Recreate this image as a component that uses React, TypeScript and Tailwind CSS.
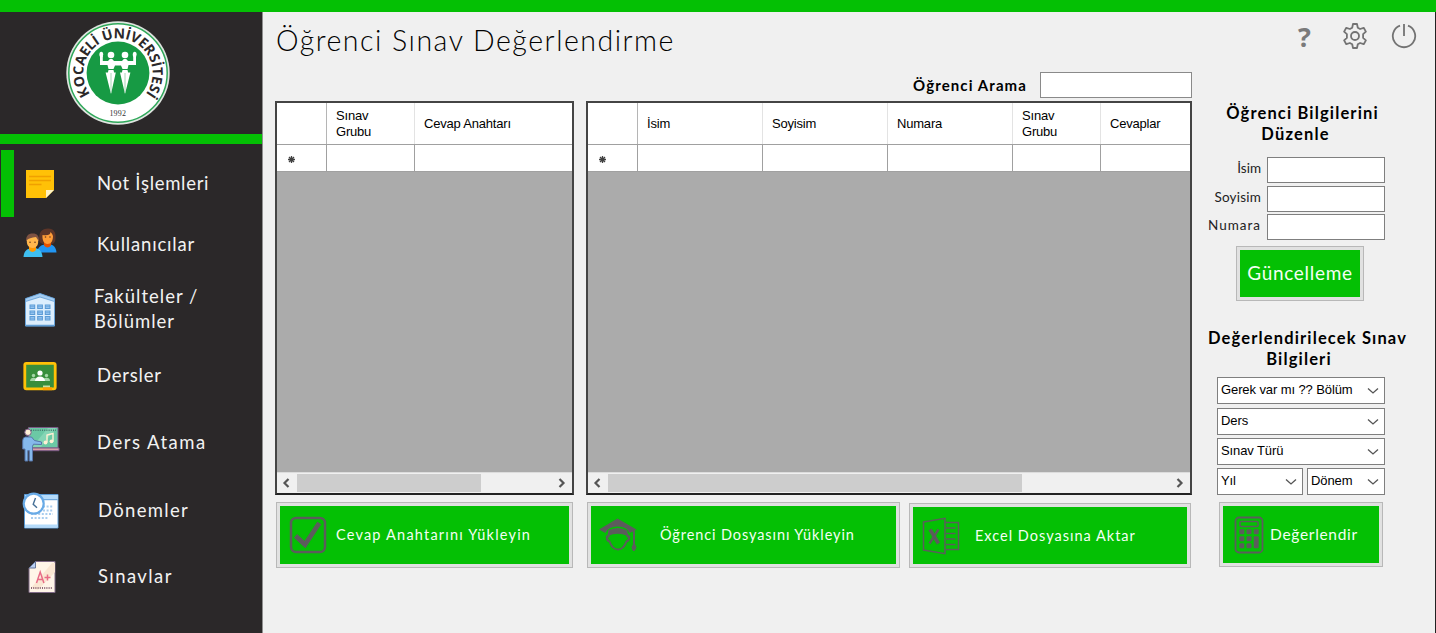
import type { ReactNode } from "react";

function Logo() {
  return (
    <svg width="104" height="104" viewBox="-52 -52 104 104">
      <defs>
        <path id="ring" d="M-26.500 22.500A34.700 34.700 0 1 1 26.500 22.500" />
      </defs>
      <circle r="51.700" fill="#dfe5e0" />
      <circle r="49.200" fill="#fff" stroke="#2fa85a" strokeWidth="1.500" />
      <circle r="31.400" fill="#179a44" />
      <text className="font-['Open_Sans',sans-serif] text-[14px] font-bold" fill="#2b2829" textAnchor="middle">
        <textPath href="#ring" startOffset="50%" textLength="153" lengthAdjust="spacing">KOCAELİ ÜNİVERSİTESİ</textPath>
      </text>
      <g fill="#fff">
        <circle cx="-7" cy="-18" r="3.300" />
        <circle cx="7" cy="-18" r="3.300" />
        <path d="M-18-17h2.800v5h5.200l1.800-2h2.400l1.800 2h8l1.800-2h2.400l1.800 2h5.200v-5H18v9H10.500L9.500-4h-5L3-7.500h-6L-4.500-4h-5l-1-4H-18z" />
        <path d="M-9.500-3h5l.6 2.500h1.700L-7 21-12.400-.500h2.300zM4.500-3h5l.6 2.500h2.300L7 21 2-.500h1.900z" />
        <ellipse cx="-16.700" cy="-18.500" rx="1.900" ry="2.800" />
        <ellipse cx="16.700" cy="-18.500" rx="1.900" ry="2.800" />
      </g>
      <path d="M-7 0v20M7 0v20" stroke="#8fcba4" strokeWidth=".8" />
      <text x="-8.600" y="43" textLength="16.500" className="font-['Liberation_Serif',serif] text-[8px]" fill="#333">1992</text>
    </svg>
  );
}

const NoteIcon = () => (
  <svg width="36" height="36" viewBox="0 0 36 36">
    <path d="M4 4h28v20l-8 8H4z" fill="#ffc107" />
    <path d="M24 32v-8h8z" fill="#fff3c4" />
    <path d="M7 10.500h22M7 14.500h22M7 18.500h12.500" stroke="#f0a000" strokeWidth="1.500" />
  </svg>
);

const UsersIcon = () => (
  <svg width="36" height="36" viewBox="0 0 36 36">
    <path d="M17.500 16C16 6 20 2.500 26 2.500s8 4 7.500 9.500c0 4-2 6-4 6h-9z" fill="#5d3528" />
    <path d="M15 26.500c1-6 4-7.500 9-8.500h3c5 1 7 3.500 7.500 8.500z" fill="#2196f3" />
    <path d="M22 15.500h7v4q-3.500 4-7 0z" fill="#e65100" />
    <path d="M20.500 9q8 1 8-3 2 2 2.500 4c0 5-2 8-5.500 8s-5.500-4-5-9z" fill="#ff9d38" />
    <circle cx="23.500" cy="11" r=".8" fill="#6d3b20" />
    <circle cx="28" cy="11" r=".8" fill="#6d3b20" />
    <path d="M1.500 31c.5-6 3-8 8-9h4c4 1 6.500 3 7 9z" fill="#3fbff0" />
    <path d="M7 20h7v4q-3.500 4-7 0z" fill="#ff9800" />
    <path d="M4 15c0-5 2-7.500 6.700-7.500S17 10 17 15z" fill="#7d5242" />
    <path d="M5 14q2-2 9-3l2 3c1 5-2 8-5.400 8S4 19 5 14z" fill="#ffb74d" />
    <circle cx="8" cy="16.300" r=".8" fill="#6d3b20" />
    <circle cx="13" cy="16.300" r=".8" fill="#6d3b20" />
  </svg>
);

const BuildingIcon = () => (
  <svg width="36" height="36" viewBox="0 0 36 36">
    <path d="M3.500 7L18 1.800 32.500 7v27h-29z" fill="#dceefd" stroke="#6aa3d8" />
    <path d="M3.500 6.500L18 1.500l14.500 5v3L18 5 3.500 9.500z" fill="#a5cdf2" stroke="#5f9cd4" strokeWidth=".8" />
    <path d="M3.500 33.500h29" stroke="#5f9cd4" strokeWidth="1.500" />
    {[13, 19, 24.5].map((y) =>
      [8, 15.7, 23.3].map((x) => (
        <g key={`${x}-${y}`}>
          <rect x={x} y={y} width="4.700" height="3.500" fill="#9ccaf4" stroke="#5b9bd5" />
          <path d={`M${x} ${y + 1.7}h4.700`} stroke="#5b9bd5" strokeWidth=".7" />
        </g>
      )),
    )}
  </svg>
);

const ClassIcon = () => (
  <svg width="36" height="36" viewBox="0 0 36 36">
    <rect x="2.800" y="5.300" width="30.400" height="25.500" rx="1.500" fill="#388e3c" stroke="#ffc107" strokeWidth="2.800" />
    <g fill="#a5d6a7">
      <circle cx="11.500" cy="17.500" r="1.700" />
      <circle cx="24.500" cy="17.500" r="1.700" />
      <path d="M8 23q.5-3.200 3.500-3.200t4 3.200zM20.500 23q.5-3.200 4-3.200t3.500 3.200z" />
    </g>
    <g fill="#fff">
      <circle cx="18" cy="15" r="2.600" />
      <path d="M13 23q.5-4.500 5-4.500t5 4.500z" />
    </g>
    <path d="M21 27.500h7v2h-7z" fill="#c5e1a5" />
    <path d="M21 29.300h9v2.900h-9z" fill="#ffa000" />
  </svg>
);

const TeacherIcon = () => (
  <svg width="40" height="40" viewBox="0 0 40 40">
    <path d="M8.500 3.500h29.500V24H8.500z" fill="#6bc9a5" stroke="#7b5a86" />
    <path d="M12 23L28 4h8L21 23z" fill="#84d5b5" />
    <path d="M11 6.200h25" stroke="#46786f" strokeWidth="1.400" strokeDasharray="1 1.200" />
    <path d="M8 24h31v2.700H8z" fill="#d9a0a8" stroke="#7b5a86" />
    <path d="M27 18.500v-7.500l6-1.500v8" fill="none" stroke="#fff0d4" strokeWidth="1.400" />
    <circle cx="25.500" cy="18.500" r="1.900" fill="#fff0d4" />
    <circle cx="31.500" cy="17.300" r="1.900" fill="#fff0d4" />
    <circle cx="8" cy="8.300" r="3.200" fill="#fff0d4" stroke="#7b5a86" />
    <path d="M5.500 13h6l3 3.500 7 1.500v2.500l-8-.3-1 2V37H9.300V26.500H7.800V37H5V25H2.700V16.500Q3 13 5.500 13z" fill="#85b9ec" stroke="#5775a8" />
  </svg>
);

const CalendarIcon = () => (
  <svg width="38" height="38" viewBox="0 0 38 38">
    <path d="M2.500 2.500h33.500V36H2.500z" fill="#fff" stroke="#5b9bd5" />
    <path d="M3 3h32.500v4.500H3zM3 32.500h32.500v3H3z" fill="#b4dbfb" />
    <path d="M3 7.700h32.500" stroke="#5b9bd5" />
    <path d="M21 14.500h10M21 18.500h10M9 22h22M9 26h18" stroke="#a9cdee" strokeWidth="2" strokeDasharray="2 1.600" />
    <circle cx="11.700" cy="11.700" r="10" fill="#fff" stroke="#68aae6" strokeWidth="2.200" />
    <path d="M13.500 6L11.200 12.200l3.800 3.600" fill="none" stroke="#456f96" strokeWidth="1.400" />
  </svg>
);

const ExamIcon = () => (
  <svg width="36" height="36" viewBox="0 0 36 36">
    <path d="M11.500 2.500H31v31H5V9z" fill="#fff5e8" stroke="#806b87" />
    <path d="M7 29L28 4h3v9L14 31z" fill="#fae6d2" />
    <path d="M11.500 2.500V9H5z" fill="#b9d0f3" stroke="#66779b" />
    <path d="M7 29h22" stroke="#8c6775" strokeWidth="2" strokeDasharray="1 1.200" />
    <path d="M12.500 24l3.700-11 3.700 11M13.800 20.500h5M20.500 18.500h6M23.500 15.500v6" fill="none" stroke="#e86b86" strokeWidth="1.500" />
  </svg>
);

const CheckIcon = () => (
  <svg width="38" height="38" viewBox="0 0 38 38" fill="none" stroke="#5c5c5c">
    <rect x="2" y="2" width="34" height="34" rx="5" strokeWidth="2.500" />
    <path d="M8.300 21.500l7.700 7L29 9" strokeWidth="4.800" strokeLinecap="square" />
  </svg>
);

const StudentIcon = () => (
  <svg width="38" height="36" viewBox="0 0 38 36">
    <path d="M0 12.500L18.500 1.500 37.500 12.500 36 13.500V27l1.500 3.500L35.500 34h-1.500L32.500 30.500 34 27V14.500L30.500 16Q28 9.500 18.500 9.500T6.500 16z" fill="#5c5c5c" />
    <path d="M9 13.500q9.500-5 19.500 0v5.500q-10-4.500-19.500 0z" fill="#5c5c5c" />
    <path d="M9.500 16.500v3H7.800q-.3 4 2.700 5Q13.500 32.500 19 32.500t8.500-8q3-1 2.700-5H28.500v-3" fill="none" stroke="#5c5c5c" strokeWidth="2" />
  </svg>
);

const ExcelIcon = () => (
  <svg width="38" height="38" viewBox="0 0 38 38" fill="none" stroke="#5c5c5c" strokeWidth="1.500">
    <path d="M1.500 5L23 1.300v35.400L1.500 33z" />
    <path d="M23 5.500h13.500v27H23M24 11h9.500M24 16.500h9.500M24 22h9.500M24 27.500h9.500" />
    <path d="M8 12.500l8.500 14" strokeWidth="3.600" />
    <path d="M16.500 12.500L7.500 26.500" strokeWidth="2.400" />
  </svg>
);

const CalculatorIcon = () => (
  <svg width="30" height="38" viewBox="0 0 30 38" fill="#5c5c5c">
    <rect x="1.500" y="1.500" width="27" height="35" rx="3.500" fill="none" stroke="#5c5c5c" strokeWidth="1.800" />
    <rect x="6" y="5.500" width="18" height="5" rx="1" fill="none" stroke="#5c5c5c" strokeWidth="1.500" />
    {[13.3, 20.3, 27.3].map((y) => (
      <g key={y}>
        <rect x="5.300" y={y} width="5" height="5" rx="1" />
        <rect x="12.500" y={y} width="5" height="5" rx="1" />
      </g>
    ))}
    <rect x="19.700" y="13.300" width="5" height="5" rx="1" />
    <rect x="19.700" y="20.300" width="5" height="12" rx="1" />
  </svg>
);

const GearIcon = () => (
  <svg width="26" height="26" viewBox="0 0 26 26" fill="none" stroke="#737373" strokeWidth="1.800" strokeLinejoin="round">
    <path d="M11 1h4l.8 3.700 2.300 1.300 3.600-1.200 2.200 3.800-2.800 2.500v3.800l2.800 2.500-2.200 3.800-3.600-1.200-2.300 1.300L15 25h-4l-.8-3.700L7.900 20l-3.600 1.200-2.200-3.800 2.800-2.500v-3.800L2.100 8.600l2.200-3.800L7.900 6l2.300-1.300z" />
    <circle cx="13" cy="13" r="4" />
  </svg>
);

const PowerIcon = () => (
  <svg width="26" height="26" viewBox="0 0 26 26" fill="none" stroke="#737373" strokeWidth="1.800">
    <path d="M9 2.600A11.200 11.200 0 1 0 17 2.600M13 1v12" />
  </svg>
);

const menu = [
  { icon: <NoteIcon />, label: "Not İşlemleri", row: "h-[67px]", text: "pl-[97px] tracking-[0.7px]", pad: "pl-[22px]" },
  { icon: <UsersIcon />, label: "Kullanıcılar", row: "h-[54px]", text: "pl-[97px] tracking-[0.8px]", pad: "pl-[22px]" },
  { icon: <BuildingIcon />, label: <>Fakülteler /<br />Bölümler</>, row: "h-[75px]", text: "pl-[94px] tracking-[1px]", pad: "pl-[22px] pt-[2px]" },
  { icon: <ClassIcon />, label: "Dersler", row: "h-[58px]", text: "pl-[97px] tracking-[0.8px]", pad: "pl-[22px] pt-px" },
  { icon: <TeacherIcon />, label: "Ders Atama", row: "h-[77px]", text: "pl-[97px] tracking-[1.5px]", pad: "pl-[20px] pt-[2px]" },
  { icon: <CalendarIcon />, label: "Dönemler", row: "h-[59px]", text: "pl-[98px] tracking-[1.3px]", pad: "pl-[22px]" },
  { icon: <ExamIcon />, label: "Sınavlar", row: "h-[73px]", text: "pl-[98px] tracking-[1.4px]", pad: "pl-[24px]" },
];

function Sidebar() {
  return (
    <aside className="flex w-[263px] shrink-0 flex-col border-r border-[#8f8f8f] bg-[#2b2829]">
      <div className="flex h-[122px] justify-center pr-[26px] pt-[9px]">
        <Logo />
      </div>
      <div className="mb-1.5 h-[10px] bg-[#04c004]" />
      <nav>
        {menu.map((m, i) => (
          <div key={i} className={`grid items-center ${m.row}`}>
            <div className={`col-start-1 row-start-1 ${m.pad}`}>{m.icon}</div>
            <div className={`col-start-1 row-start-1 whitespace-nowrap text-[18.500px] leading-[25px] text-[#f2f2f2] ${m.text}`}>{m.label}</div>
            {i === 0 && <div className="col-start-1 row-start-1 ml-px h-[67px] w-[13px] bg-[#04c004]" />}
          </div>
        ))}
      </nav>
    </aside>
  );
}

const ui = "font-['Liberation_Sans',sans-serif] text-black";

type Col = { label: ReactNode; w: string };

function Grid({ width, cols, thumb }: { width: string; cols: Col[]; thumb: string }) {
  return (
    <div className={`flex h-[394px] flex-col border-2 border-[#444] border-b-[#222] bg-[#ababab] ${width} ${ui}`}>
      <div className="flex h-[42px] border-b border-[#a0a0a0] bg-white">
        <div className="w-[50px] shrink-0 border-r border-[#b5b5b5]" />
        {cols.map((c, i) => (
          <div key={i} className={`flex shrink-0 items-center whitespace-nowrap border-r border-[#e3e3e3] pl-[9px] pt-px text-[13px] leading-4 tracking-[-0.2px] last:border-r-0 ${c.w}`}>
            {c.label}
          </div>
        ))}
      </div>
      <div className="flex h-[27px] border-b border-[#a0a0a0] bg-white">
        <div className="flex w-[50px] shrink-0 items-center border-r border-[#a0a0a0] pl-[11px] pt-[3px]">
          <svg width="7" height="7" viewBox="0 0 7 7" stroke="#404040" strokeWidth="1.300">
            <path d="M3.500 0v7M0 3.500h7M1 1l5 5M6 1L1 6" />
          </svg>
        </div>
        {cols.map((c, i) => (
          <div key={i} className={`shrink-0 border-r border-[#a0a0a0] last:border-r-0 ${c.w}`} />
        ))}
      </div>
      <div className="mt-auto flex h-[21px] items-center justify-between border-t border-[#dcdcdc] bg-[#f0f0f0] pr-[6px]">
        <div className="flex h-full items-center">
          <svg className="ml-[5px] mr-[7px]" width="8" height="10" viewBox="0 0 8 10" fill="none" stroke="#555" strokeWidth="2.200"><path d="M6.500 1L2.500 5l4 4" /></svg>
          <div className={`h-[18px] bg-[#cdcdcd] ${thumb}`} />
        </div>
        <svg width="8" height="10" viewBox="0 0 8 10" fill="none" stroke="#555" strokeWidth="2.200"><path d="M1.500 1l4 4-4 4" /></svg>
      </div>
    </div>
  );
}

function Button({ className, children }: { className: string; children: ReactNode }) {
  return (
    <button className={`border border-[#b8b8b8] bg-[#e1e1e1] p-[3px] ${className}`}>
      <span className="flex h-full items-center whitespace-nowrap bg-[#04c004] text-[#f4fff4]">{children}</span>
    </button>
  );
}

function Select({ label, className }: { label: string; className: string }) {
  return (
    <div className={`flex h-[27px] items-center justify-between whitespace-nowrap border border-[#7f7f7f] bg-white pl-[3px] pr-[5px] text-[13px] tracking-[-0.1px] ${ui} ${className}`}>
      <span className="pb-px">{label}</span>
      <svg width="12" height="8" viewBox="0 0 12 8" fill="none" stroke="#555" strokeWidth="1.300"><path d="M1 1.500l5 4.500 5-4.500" /></svg>
    </div>
  );
}

function Field({ label, className, tracking }: { label: string; className: string; tracking: string }) {
  return (
    <label className={`flex items-center justify-end ${className}`}>
      <span className={`mr-[6px] pb-[3px] text-[13.500px] text-[#222] ${tracking}`}>{label}</span>
      <input className="h-[26px] w-[118px] border border-[#7f7f7f] bg-white" />
    </label>
  );
}

export default function App() {
  return (
    <div className="flex h-[633px] w-[1436px] flex-col overflow-hidden bg-[#f0f0f0] font-['Lato',sans-serif]">
      <div className="h-3 shrink-0 bg-[#04c004]" />
      <div className="flex flex-1">
        <Sidebar />
        <main className="flex flex-1 border-r border-[#222]">
          <section className="ml-3 flex w-[917px] shrink-0 flex-col">
            <h1 className="h-[60px] whitespace-nowrap pl-px pt-[9px] text-[28.500px] font-light leading-[38px] tracking-[1.500px] text-black">Öğrenci Sınav Değerlendirme</h1>
            <div className="mb-[3px] flex h-[26px] items-center justify-end">
              <span className="mr-[13px] text-[15px] font-bold tracking-[1.100px] text-black">Öğrenci Arama</span>
              <input className="h-[26px] w-[152px] border border-[#8a8a8a] bg-white" />
            </div>
            <div className="flex justify-between">
              <Grid
                width="w-[299px]"
                thumb="w-[184px]"
                cols={[{ label: <>Sınav<br />Grubu</>, w: "w-[88px]" }, { label: "Cevap Anahtarı", w: "w-[157px]" }]}
              />
              <Grid
                width="w-[606px]"
                thumb="w-[414px]"
                cols={[
                  { label: "İsim", w: "w-[125px]" },
                  { label: "Soyisim", w: "w-[125px]" },
                  { label: "Numara", w: "w-[125px]" },
                  { label: <>Sınav<br />Grubu</>, w: "w-[88px]" },
                  { label: "Cevaplar", w: "w-[89px]" },
                ]}
              />
            </div>
            <div className="mt-[7px] flex items-end text-[14.500px]">
              <Button className="ml-px h-[66px] w-[297px] tracking-[1.200px]">
                <span className="ml-[9px] mr-[9px]"><CheckIcon /></span>Cevap Anahtarını Yükleyin
              </Button>
              <Button className="ml-[14px] h-[66px] w-[313px] tracking-[0.900px]">
                <span className="ml-[8px] mr-[23px]"><StudentIcon /></span>Öğrenci Dosyasını Yükleyin
              </Button>
              <Button className="ml-[9px] h-[65px] w-[282px] tracking-[1px]">
                <span className="ml-[9px] mr-[15px]"><ExcelIcon /></span>Excel Dosyasına Aktar
              </Button>
            </div>
          </section>
          <aside className="flex flex-1 flex-col">
            <div className="flex h-[48px] items-center justify-end pr-[18px]">
              <span className="mr-[31px] font-['Open_Sans',sans-serif] text-[27px] font-bold leading-none text-[#7a7a7a]">?</span>
              <span className="mr-[23px]"><GearIcon /></span>
              <PowerIcon />
            </div>
            <h2 className="mt-[43px] flex h-[42px] flex-col items-center whitespace-nowrap pr-[22px] text-[16.500px] font-bold leading-[21px] tracking-[1.150px] text-black">
              <span>Öğrenci Bilgilerini</span>
              <span className="pr-[14px]">Düzenle</span>
            </h2>
            <div className="mt-3 flex flex-col pr-[50px]">
              <Field label="İsim" className="h-[26px]" tracking="tracking-[0px]" />
              <Field label="Soyisim" className="mt-[3px] h-[26px]" tracking="tracking-[0.200px]" />
              <Field label="Numara" className="mt-[2px] h-[26px]" tracking="tracking-[1px]" />
            </div>
            <Button className="ml-[44px] mt-[6px] h-[55px] w-[128px] text-[19px] tracking-[0.700px]">
              <span className="w-full text-center">Güncelleme</span>
            </Button>
            <h2 className="mt-[27px] flex h-[42px] flex-col items-center whitespace-nowrap pr-[12px] text-[16.500px] font-bold leading-[21px] tracking-[1.150px] text-black">
              <span>Değerlendirilecek Sınav</span>
              <span className="pr-[17px]">Bilgileri</span>
            </h2>
            <div className="ml-[25px] mt-[7px] flex w-[168px] flex-col gap-[3px]">
              <Select label="Gerek var mı ?? Bölüm" className="mb-px" />
              <Select label="Ders" className="" />
              <Select label="Sınav Türü" className="" />
              <div className="flex justify-between">
                <Select label="Yıl" className="w-[86px]" />
                <Select label="Dönem" className="w-[78px]" />
              </div>
            </div>
            <Button className="ml-[27px] mt-[7px] h-[65px] w-[164px] text-[15.500px] tracking-[0.700px]">
              <span className="ml-[11px] mr-[6px]"><CalculatorIcon /></span>Değerlendir
            </Button>
          </aside>
        </main>
      </div>
    </div>
  );
}
